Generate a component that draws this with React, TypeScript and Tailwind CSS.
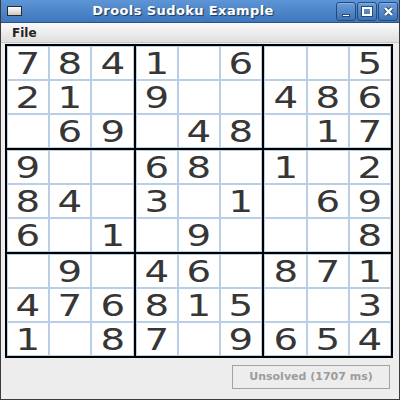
// each row written out as 9 chars, space = empty cell
const puzzle: string[] = [
  '7841 6  5',
  '21 9  486',
  ' 69 48 17',
  '9  68 1 2',
  '84 3 1 69',
  '6 1 9   8',
  ' 9 46 871',
  '476815  3',
  '1 87 9654',
];

function Cell({ value }: { value: string }) {
  return (
    <div className="bg-white flex items-center justify-center">
      {value.trim() && (
        <span className="inline-block scale-x-[1.25] text-[31px] leading-none text-[#363636] font-['DejaVu_Sans',sans-serif]">
          {value}
        </span>
      )}
    </div>
  );
}

function Block({ br, bc }: { br: number; bc: number }) {
  const cells = [];
  for (let r = 0; r < 3; r++) {
    for (let c = 0; c < 3; c++) {
      const v = puzzle[br * 3 + r][bc * 3 + c] ?? ' ';
      cells.push(<Cell key={`${r}-${c}`} value={v} />);
    }
  }
  return (
    <div className="grid grid-cols-3 grid-rows-3 gap-[2px] bg-[#b8cfe6] p-px">
      {cells}
    </div>
  );
}

function TitleButton({ children }: { children: React.ReactNode }) {
  return (
    <div className="w-[20px] h-[19px] rounded-[3px] border border-[#27497a] bg-linear-to-b from-[#6b9ddb] to-[#3d73b6] flex items-center justify-center shadow-[inset_0_1px_0_#86b2e6]">
      {children}
    </div>
  );
}

export default function App() {
  const blocks = [];
  for (let br = 0; br < 3; br++) {
    for (let bc = 0; bc < 3; bc++) {
      blocks.push(<Block key={`${br}-${bc}`} br={br} bc={bc} />);
    }
  }

  return (
    <div className="w-[400px] h-[400px] flex flex-col bg-[#ededed] border-x border-b border-[#3a3a3a] font-['DejaVu_Sans',sans-serif] overflow-hidden">
      {/* title bar */}
      <div className="h-[23px] shrink-0 flex items-center bg-linear-to-b from-[#5d95d6] to-[#3e77bd] border-b border-[#2b5287] px-[6px]">
        <div className="w-[15px] h-[10px] border border-[#2a2a2a] bg-linear-to-b from-[#ffffff] to-[#c8c8c8]" />
        <div className="flex-1 text-center text-white font-bold text-[13px] tracking-[0.4px] [text-shadow:1px_1px_1px_#1b3558] pl-[8px]">
          Drools Sudoku Example
        </div>
        <div className="flex gap-[1px] -mr-[5px]">
          <TitleButton>
            <div className="w-[8px] h-[3px] bg-white mt-[8px] border border-[#284a78]" />
          </TitleButton>
          <TitleButton>
            <div className="w-[10px] h-[9px] border-2 border-white outline outline-1 outline-[#284a78]" />
          </TitleButton>
          <TitleButton>
            <svg width="11" height="11" viewBox="0 0 11 11">
              <path d="M2 2 L9 9 M9 2 L2 9" stroke="#284a78" strokeWidth="4" />
              <path d="M2 2 L9 9 M9 2 L2 9" stroke="#ffffff" strokeWidth="2.4" />
            </svg>
          </TitleButton>
        </div>
      </div>

      {/* menu bar */}
      <div className="h-[20px] shrink-0 flex items-center bg-linear-to-b from-[#fbfbfb] to-[#dedede] border-b border-[#c8c8c8] pl-[11px]">
        <span className="text-[12px] font-bold text-[#222222]">File</span>
      </div>

      {/* content */}
      <div className="flex-1 flex flex-col pl-[4px] pt-[1px]">
        <div className="w-[388px] h-[314px] grid grid-cols-3 grid-rows-3 gap-[2px] bg-black p-[2px]">
          {blocks}
        </div>
        <div className="flex justify-end pr-[9px] pt-[7px]">
          <div className="w-[158px] h-[24px] border border-[#a3a3a3] flex items-center justify-center text-[11px] font-bold text-[#9c9c9c]">
            Unsolved (1707 ms)
          </div>
        </div>
      </div>
    </div>
  );
}
